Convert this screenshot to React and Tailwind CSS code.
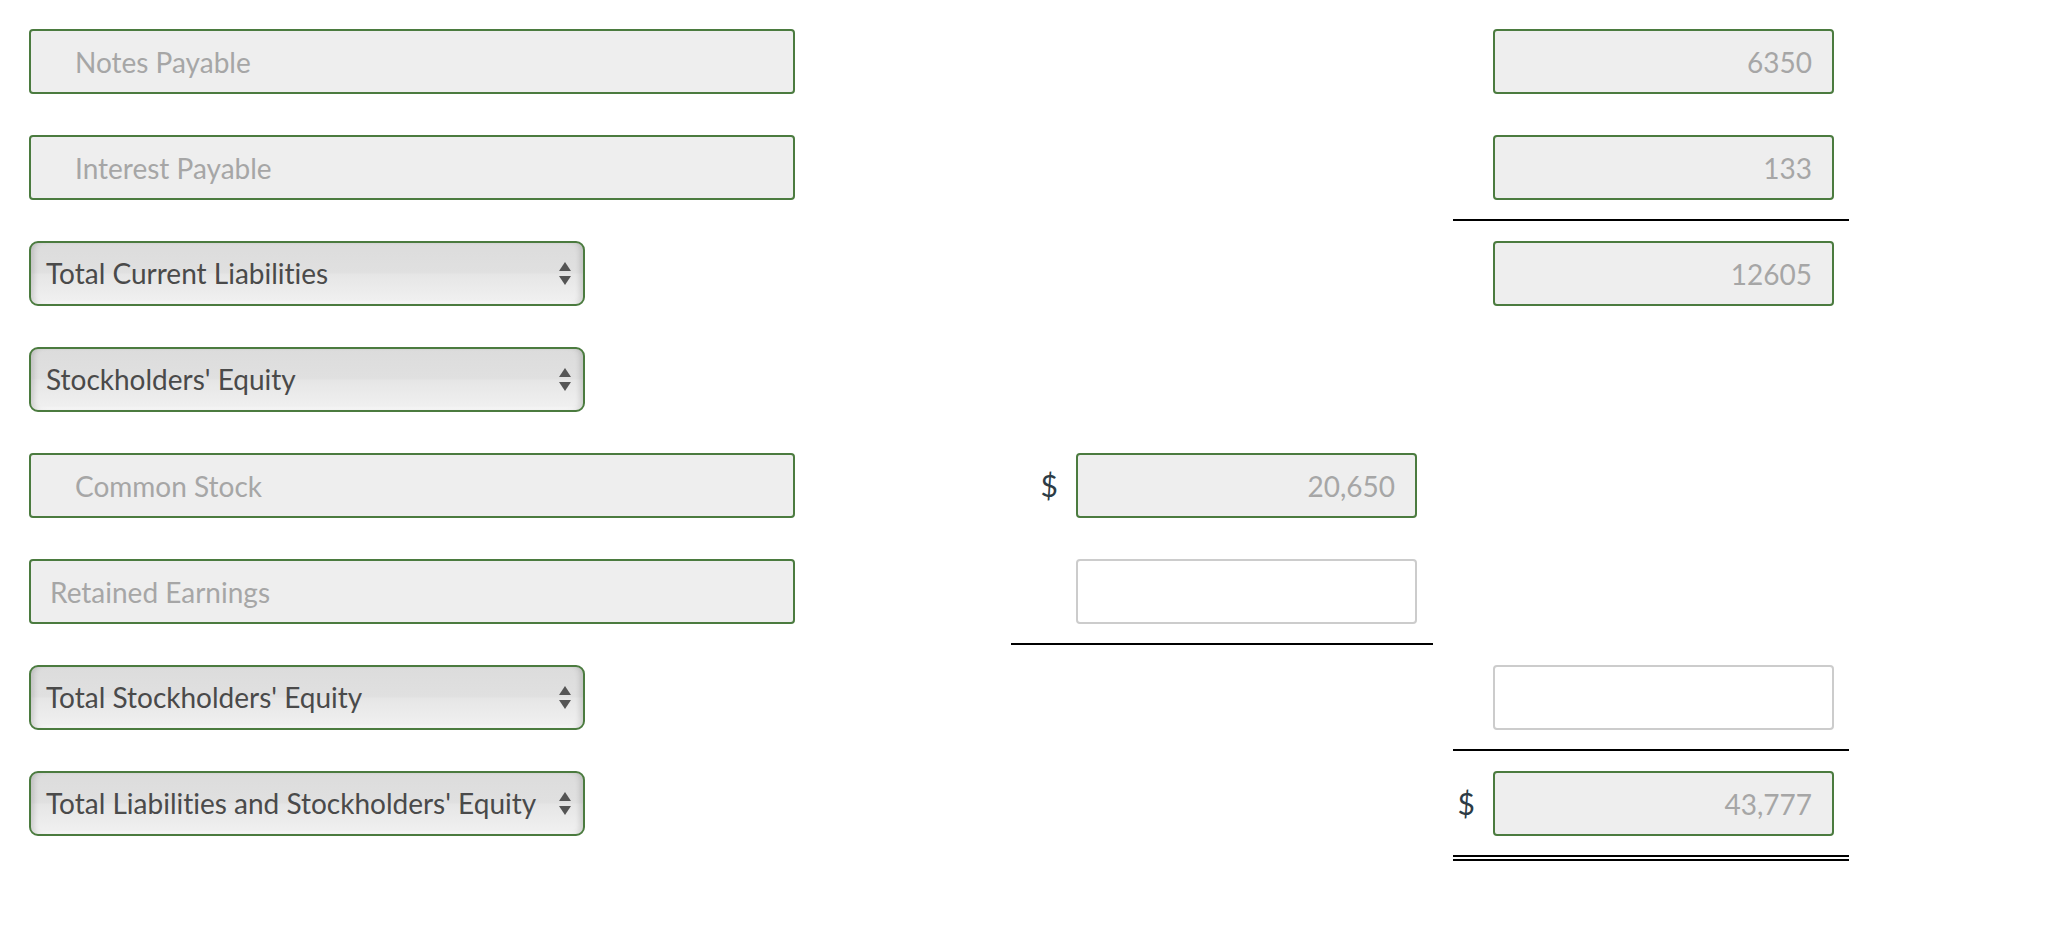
import React from "react";

const font = { fontFamily: "Lato, 'Open Sans', sans-serif" };

function LabelBox({ text, indent }) {
  return (
    <div
      className={
        "h-[65px] w-[766px] flex items-center rounded-[4px] border-2 border-[#4b7b3f] bg-[#eeeeee] text-[28px] text-[#a6a6a6] " +
        (indent ? "pl-[44px]" : "pl-[19px]")
      }
    >
      {text}
    </div>
  );
}

function SelectBox({ text }) {
  return (
    <div className="h-[65px] w-[556px] flex items-center justify-between rounded-[9px] border-2 border-[#4b7b3f] bg-[linear-gradient(to_bottom,#dcdcdc_0%,#e0e0e0_48%,#e6e6e6_52%,#f1f1f1_100%)] pl-[15px] pr-[11px] text-[28px] text-[#4a4a4a] shadow-[inset_6px_0_6px_-4px_rgba(0,0,0,0.18),inset_-6px_0_6px_-4px_rgba(0,0,0,0.18),inset_0_-3px_4px_-2px_rgba(255,255,255,0.9)]">
      <span className="-mt-[2px]">{text}</span>
      <svg width="14" height="26" viewBox="0 0 14 26">
        <polygon points="7,1 13,10 1,10" fill="#555555" />
        <polygon points="1,15 13,15 7,24" fill="#555555" />
      </svg>
    </div>
  );
}

function ValueBox({ value, empty }) {
  if (empty) {
    return (
      <div className="h-[65px] w-[341px] rounded-[4px] border-2 border-[#cccccc] bg-white" />
    );
  }
  return (
    <div className="h-[65px] w-[341px] flex items-center justify-end rounded-[4px] border-2 border-[#4b7b3f] bg-[#eeeeee] pr-[20px] text-[28px] text-[#a6a6a6]">
      {value}
    </div>
  );
}

function Cell({ box, dollar, line, lead }) {
  return (
    <div className="flex flex-col">
      <div className="h-[65px] flex items-center">
        <div className={"flex justify-end pr-[18px] " + lead}>
          {dollar && <span className="text-[30px] text-[#2d3b45]">$</span>}
        </div>
        {box}
      </div>
      {line === "single" && <div className="mt-[19px] h-[2px] bg-black" />}
      {line === "double" && (
        <div className="mt-[19px]">
          <div className="h-[2px] bg-black" />
          <div className="mt-[2px] h-[2px] bg-black" />
        </div>
      )}
    </div>
  );
}

function Row({ left, mid, right }) {
  return (
    <div className="flex h-[106px]">
      <div className="w-[766px]">{left}</div>
      <div className="ml-[216px] w-[422px]">{mid}</div>
      <div className="ml-[20px] w-[396px]">{right}</div>
    </div>
  );
}

export default function App() {
  return (
    <div
      className="min-h-screen bg-white pl-[29px] pt-[29px] [font-variant-ligatures:none]"
      style={font}
    >
      <Row
        left={<LabelBox text="Notes Payable" indent />}
        right={<Cell lead="w-[40px]" box={<ValueBox value="6350" />} />}
      />
      <Row
        left={<LabelBox text="Interest Payable" indent />}
        right={<Cell lead="w-[40px]" box={<ValueBox value="133" />} line="single" />}
      />
      <Row
        left={<SelectBox text="Total Current Liabilities" />}
        right={<Cell lead="w-[40px]" box={<ValueBox value="12605" />} />}
      />
      <Row left={<SelectBox text="Stockholders' Equity" />} />
      <Row
        left={<LabelBox text="Common Stock" indent />}
        mid={<Cell lead="w-[65px]" dollar box={<ValueBox value="20,650" />} />}
      />
      <Row
        left={<LabelBox text="Retained Earnings" />}
        mid={<Cell lead="w-[65px]" box={<ValueBox empty />} line="single" />}
      />
      <Row
        left={<SelectBox text="Total Stockholders' Equity" />}
        right={<Cell lead="w-[40px]" box={<ValueBox empty />} line="single" />}
      />
      <Row
        left={<SelectBox text="Total Liabilities and Stockholders' Equity" />}
        right={<Cell lead="w-[40px]" dollar box={<ValueBox value="43,777" />} line="double" />}
      />
    </div>
  );
}
